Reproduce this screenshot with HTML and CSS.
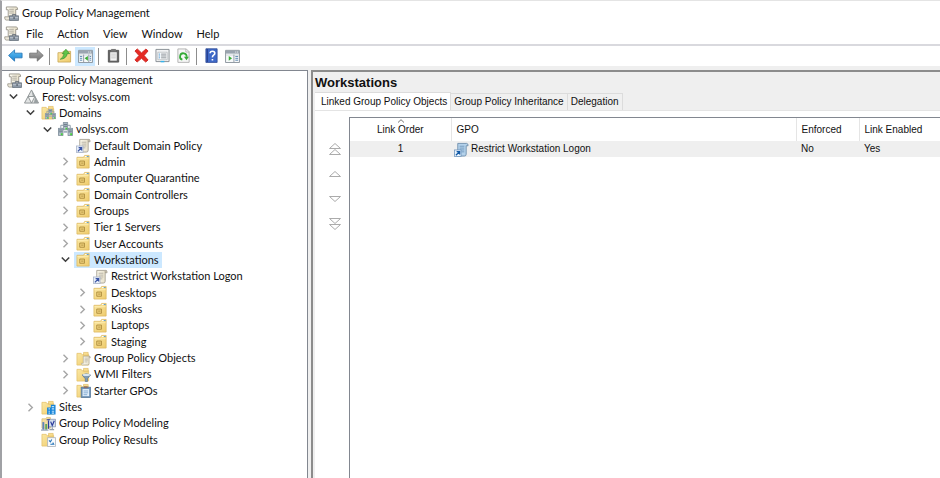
FILE: index.html
```html
<!DOCTYPE html>
<html lang="en">
<head>
<meta charset="utf-8">
<title>Group Policy Management</title>
<link rel="stylesheet" href="styles.css">
</head>
<body>
<svg class="sprite" aria-hidden="true">
  <defs>
    <linearGradient id="gold" x1="0" y1="0" x2="1" y2="1"><stop offset="0" stop-color="#fbe8a4"/><stop offset="1" stop-color="#eecb6c"/></linearGradient>
    <linearGradient id="blue" x1="0" y1="0" x2="0" y2="1"><stop offset="0" stop-color="#63c3f5"/><stop offset="1" stop-color="#1b83d2"/></linearGradient>
    <linearGradient id="grey" x1="0" y1="0" x2="0" y2="1"><stop offset="0" stop-color="#b0b0b0"/><stop offset="1" stop-color="#6f6f6f"/></linearGradient>
    <linearGradient id="paper" x1="0" y1="0" x2="1" y2="0"><stop offset="0" stop-color="#fffef5"/><stop offset="1" stop-color="#e4dcc4"/></linearGradient>
  </defs>
  <symbol id="folder" viewBox="0 0 16 16">
    <path d="M1 2.500h4.500l1 1.500h7v11H1z" fill="url(#gold)" stroke="#e3c06c" stroke-width=".8"/>
    <path d="M8 1.500h5v3H8z" fill="#f8dd8e" stroke="#dcb45a" stroke-width=".6"/>
  </symbol>
  <symbol id="scroll" viewBox="0 0 16 16">
    <path d="M4 1.500h9.500q1.800.2 1.500 2.500h-2v9q0 2-2 2H2.500q-1.500-.3-1.500-2.500h3z" fill="url(#paper)" stroke="#a39d8f" stroke-width=".9"/>
    <path d="M13 4V2.600q.5-1.100 1.400-.8" fill="none" stroke="#8c8677" stroke-width=".8"/>
    <path d="M6 4.500h5M6 6.500h5M6 8.500h5M6 10.500h4" stroke="#aaa69b" stroke-width=".8"/>
  </symbol>
  <symbol id="i-console" viewBox="0 0 16 16">
    <path d="M2.500 1h10.500q1.700.2 1.500 2.700h-2V11h-8V4h-2z" fill="url(#paper)" stroke="#918d82" stroke-width=".9"/>
    <path d="M5.500 3.500h5M5.500 5.500h5M5.500 7.500h5" stroke="#a5a196" stroke-width=".9"/>
    <path d="M.8 11.500h7V15H2.300Q.8 14.700.8 13z" fill="#ece8da" stroke="#918d82" stroke-width=".8"/>
    <path d="M9 10.500V9h3.500v1.500" fill="none" stroke="#66707c"/>
    <rect x="6" y="10.500" width="9.500" height="5" fill="#8c98a6" stroke="#66707c" stroke-width=".8"/>
    <path d="M6.400 12.500h8.700" stroke="#cfd7de" stroke-width=".8"/><path d="M10 12h1.500v1.700H10z" fill="#48525d"/>
  </symbol>
  <symbol id="i-forest" viewBox="0 0 16 16">
    <path d="M8 1L15.500 15H.5z" fill="#e1e3e3" stroke="#84898b" stroke-width=".9"/>
    <path d="M4.400 8h7.200L8 15z" fill="#fafafa" stroke="#84898b" stroke-width=".9"/>
    <path d="M8 1l1.500 7h2.300zM12 8.500L10.500 15h5z" fill="#9aa0a2"/>
  </symbol>
  <symbol id="tower" viewBox="0 0 6 9">
    <path d="M.5 .5h5v8h-5z" fill="#b4c1cc" stroke="#71818f" stroke-width=".8"/>
    <path d="M1.200 2.500h3.600M1.200 4.500h3.600" stroke="#546675" stroke-width=".9"/><path d="M3 6h2v2H3z" fill="#45d13c"/>
  </symbol>
  <symbol id="i-domain" viewBox="0 0 16 16">
    <path d="M3 7V3.500h10V7" fill="none" stroke="#8496a5"/>
    <use href="#tower" x="5" y="0" width="6" height="9"/><use href="#tower" x="0" y="6" width="6" height="9"/><use href="#tower" x="10" y="6" width="6" height="9"/>
    <path d="M6 9.500h4v2H6z" fill="#a3b1bd"/>
  </symbol>
  <symbol id="i-domains" viewBox="0 0 16 16">
    <use href="#folder" width="16" height="16"/>
    <use href="#i-domain" x="4" y="4" width="12" height="12"/>
  </symbol>
  <symbol id="i-link" viewBox="0 0 16 16">
    <use href="#scroll" width="16" height="16"/>
    <rect x=".5" y="8.500" width="7" height="7" fill="#e8effa" stroke="#a5b1c6" stroke-width=".8"/>
    <path d="M2 14.200l3.500-3.500M2.800 10.200h3.200v3.200" fill="none" stroke="#3a55a5" stroke-width="1.300"/>
  </symbol>
  <symbol id="i-gpo" viewBox="0 0 16 16">
    <path d="M4 1.500h9.500q1.800.2 1.500 2.500h-2v9q0 2-2 2H2.500q-1.500-.3-1.500-2.500h3z" fill="#b4d2eb" stroke="#6889a9" stroke-width=".9"/>
    <path d="M6 4.500h5M6 6.500h5M6 8.500h5M8 10.500h3" stroke="#6f96ba" stroke-width=".9"/>
    <rect x=".5" y="8.500" width="7" height="7" fill="#e9f3fc" stroke="#6b92bb" stroke-width=".8"/>
    <path d="M2 14.200l3.500-3.500M2.800 10.200h3.200v3.200" fill="none" stroke="#145ba6" stroke-width="1.400"/>
  </symbol>
  <symbol id="i-ou" viewBox="0 0 16 16">
    <path d="M1 3.500h7l1.200-2H14V15H1z" fill="url(#gold)" stroke="#dcb75e" stroke-width=".8"/>
    <path d="M9.500 2.700h2" stroke="#fff"/><path d="M11.500 2.700h2" stroke="#4c9bdc"/>
    <path d="M1.500 5h12" stroke="#fff0b9" stroke-width=".8"/>
    <path d="M4 7.500h5v4.500H4zM5.500 9.700h2.500" fill="#f0d27c" stroke="#a98739" stroke-width=".9"/>
  </symbol>
  <symbol id="i-objects" viewBox="0 0 16 16">
    <use href="#folder" width="16" height="16"/><use href="#scroll" x="5" y="4" width="11" height="12"/>
  </symbol>
  <symbol id="i-filter" viewBox="0 0 16 16">
    <use href="#folder" width="16" height="16"/>
    <path d="M6.500 8.500q4.500-2.500 9 0l-3.300 4v3h-2.300v-3z" fill="#809bb3" stroke="#5e788f" stroke-width=".8"/><ellipse cx="11" cy="8.500" rx="4" ry="1.200" fill="#d7e4ee"/>
  </symbol>
  <symbol id="i-starter" viewBox="0 0 16 16">
    <use href="#folder" width="16" height="16"/>
    <rect x="5.500" y="4.500" width="10" height="11" fill="#6f93b8" stroke="#56789b" stroke-width=".8"/><path d="M7 6.500h7v7.500H7z" fill="#e6f2fc"/><path d="M8.500 3.500h4v2h-4z" fill="#8f6e62"/><path d="M8 8.500h5M8 10.500h5M8 12.500h4" stroke="#6394c4" stroke-width=".8"/>
  </symbol>
  <symbol id="i-sites" viewBox="0 0 16 16">
    <use href="#folder" width="16" height="16"/>
    <path d="M6.500 8h4V5h5v10.500h-9z" fill="#1684d8"/><path d="M8 9.500h1.500M11.500 7h2.500M8 12h1.500M11.500 9.500h2.500M11.500 12h2.500M8 14h1.500M11.500 14h2.500" stroke="#bfe2fb" stroke-width="1.200"/>
  </symbol>
  <symbol id="i-model" viewBox="0 0 16 16">
    <path d="M1 3h4l1-1.500h4V13H1z" fill="#f4dda0" stroke="#d8b970" stroke-width=".8"/>
    <path d="M8 3.500h7.500v8H8z" fill="#d3deec" stroke="#8292aa" stroke-width=".8"/><path d="M9 14.500h5M12 12v2.500" stroke="#929da8" stroke-width="1.200"/>
    <path d="M1.500 6.500h2v8h-2z" fill="#5b83bd"/><path d="M4.500 8.500h2v6h-2z" fill="#5fa661"/><path d="M8 5v8.500M6 4h3.500M10.300 6l1.700 4 2.200-5" fill="none" stroke="#2b3c9c" stroke-width="1.300"/>
    <path d="M0 15h8" stroke="#71839b"/>
  </symbol>
  <symbol id="i-results" viewBox="0 0 16 16">
    <use href="#folder" width="16" height="16"/>
    <path d="M7 6h8.500v9.500H7z" fill="#f9fbfd" stroke="#a6aeb8" stroke-width=".8"/><path d="M8.500 9l1.500 1.500 1.500-2.500M10 13h3.500l-1-1.700" fill="none" stroke="#2675b9" stroke-width="1.200"/>
  </symbol>
  <symbol id="i-back" viewBox="0 0 16 16"><path d="M.6 8L7 2v3.500h8v5H7V14z" fill="url(#blue)" stroke="#2475b7" stroke-width=".9" stroke-linejoin="round"/></symbol>
  <symbol id="i-forward" viewBox="0 0 16 16"><path d="M15.200 8L8.800 2v3.500H.7v5h8.100V14z" fill="url(#grey)" stroke="#717171" stroke-width=".9" stroke-linejoin="round"/></symbol>
  <symbol id="i-up" viewBox="0 0 16 16">
    <path d="M1 5h4.500l1.200-1.500H14.500V15H1z" fill="url(#gold)" stroke="#c5a14e" stroke-width=".8"/>
    <path d="M3.500 12q3.500-2 4-6H5.500L9.500 1.300 13.500 6h-2.500q-1 5.500-7.500 6z" fill="#61c548" stroke="#338b2d" stroke-width=".7"/>
  </symbol>
  <symbol id="window" viewBox="0 0 16 16">
    <path d="M.6 2.500h14.800v13H.6z" fill="#f7f9fa" stroke="#8a939c"/><path d="M1 3h14v3H1z" fill="#9aa4af"/><path d="M11 4.300h1M13 4.300h1" stroke="#fff"/>
    <path d="M1 7.500h14" stroke="#cfd5da"/>
  </symbol>
  <symbol id="i-tree" viewBox="0 0 16 16"><use href="#window" width="16" height="16"/><path d="M6 7v8M11.500 7v8" stroke="#919ba5"/><path d="M2 9h2.500M2 11h2.500M2 13h2.500M12.500 9H14M12.500 11H14M12.500 13H14" stroke="#5683ad"/><path d="M10.500 8.500v5L7 11z" fill="#39ac35"/></symbol>
  <symbol id="i-action" viewBox="0 0 16 16"><use href="#window" width="16" height="16"/><path d="M4 8.500v5L7.500 11z" fill="#39ac35"/><path d="M9.500 7v8" stroke="#919ba5"/><path d="M11 9h3M11 11h3M11 13h3" stroke="#5683ad"/></symbol>
  <symbol id="i-clip" viewBox="0 0 16 16"><path d="M2.500 2.500h11v12.500h-11z" fill="#666" stroke="#555"/><path d="M4.500 4.500h7v9h-7z" fill="#f5f5f5"/><path d="M5.500 1h5v3h-5z" fill="#777"/><path d="M5.500 6.500h5M5.500 8.500h5M5.500 10.500h5" stroke="#bbb" stroke-width=".8"/></symbol>
  <symbol id="i-delete" viewBox="0 0 16 16"><path d="M1 3.200L3.500 1 8 5.200 12.800 1 15 3.200 10.800 8l4.200 4.800-2.500 2.200L8 11l-4.700 4L1 12.700 5.300 8z" fill="#e62a24" stroke="#c8241f" stroke-width=".9"/></symbol>
  <symbol id="i-props" viewBox="0 0 16 16"><path d="M1 1.500h14v13H1z" fill="#f2f3f4" stroke="#858c92"/><path d="M3 4.500h10v8H3z" fill="#fff" stroke="#b0b5ba" stroke-width=".8"/><path d="M4 6.500h1.500M4 8.500h1.500M4 10.500h1.500" stroke="#4995d1"/><path d="M6.500 6.500H12M6.500 8.500H12M6.500 10.500H12" stroke="#7f878f"/><path d="M6 14.500h4" stroke="#36b4ed" stroke-width="1.500"/></symbol>
  <symbol id="i-refresh" viewBox="0 0 16 16"><path d="M2 1h9l3 3v11.300H2z" fill="#f7f7f7" stroke="#a9a9a9" stroke-width=".9"/><path d="M10.500 1v3.300H14" fill="none" stroke="#a9a9a9" stroke-width=".8"/><path d="M6.800 12.500A3.500 3.500 0 1 1 11.300 9.500" fill="none" stroke="#35aa38" stroke-width="1.900"/><path d="M8.500 9.200h5.200l-2.500 3.800z" fill="#35aa38"/></symbol>
  <symbol id="i-help" viewBox="0 0 16 16"><path d="M2 .8h12v14.600H2z" fill="#3f69c8" stroke="#2a4592" stroke-width=".8"/><path d="M3.500 1v14" stroke="#243d89" stroke-width="1.200"/><path d="M6.500 5.700q0-2.300 2.500-2.300t2.500 2.200q0 1.200-1.300 2t-1.200 2.400M9 11.700v1.700" fill="none" stroke="#fff" stroke-width="1.700"/></symbol>
  <symbol id="c-closed" viewBox="0 0 9 9"><path d="M2.500 .8L6.300 4.500 2.500 8.200" fill="none" stroke="#a6a6a6" stroke-width="1.400"/></symbol>
  <symbol id="c-open" viewBox="0 0 9 9"><path d="M.8 2.500L4.500 6.200 8.200 2.500" fill="none" stroke="#404040" stroke-width="1.600"/></symbol>
  <symbol id="m-up" viewBox="0 0 14 14"><path d="M1.500 9.500h11L7 4.500z" fill="#fff" stroke="#ababab"/></symbol>
  <symbol id="m-down" viewBox="0 0 14 14"><path d="M1.500 4.500h11L7 9.500z" fill="#fff" stroke="#ababab"/></symbol>
  <symbol id="m-top" viewBox="0 0 14 14"><path d="M1.500 6.500h11L7 1.500zM1.500 12.500h11L7 7.500z" fill="#fff" stroke="#ababab"/></symbol>
  <symbol id="m-bottom" viewBox="0 0 14 14"><path d="M1.500 1.500h11L7 6.500zM1.500 7.500h11L7 12.500z" fill="#fff" stroke="#ababab"/></symbol>
</svg>

<div class="window">
  <header class="titlebar"><svg class="icon"><use href="#i-console"/></svg><h1>Group Policy Management</h1></header>
  <nav class="menubar">
    <svg class="icon"><use href="#i-console"/></svg>
    <button>File</button><button>Action</button><button>View</button><button>Window</button><button>Help</button>
  </nav>
  <div class="toolbar" role="toolbar">
    <button aria-label="Back"><svg class="icon"><use href="#i-back"/></svg></button>
    <button aria-label="Forward"><svg class="icon"><use href="#i-forward"/></svg></button>
    <span class="sep"></span>
    <button aria-label="Up one level"><svg class="icon"><use href="#i-up"/></svg></button>
    <button class="pressed" aria-label="Console tree" aria-pressed="true"><svg class="icon"><use href="#i-tree"/></svg></button>
    <span class="sep"></span>
    <button aria-label="Paste"><svg class="icon"><use href="#i-clip"/></svg></button>
    <span class="sep"></span>
    <button aria-label="Delete"><svg class="icon"><use href="#i-delete"/></svg></button>
    <button aria-label="Properties"><svg class="icon"><use href="#i-props"/></svg></button>
    <button aria-label="Refresh"><svg class="icon"><use href="#i-refresh"/></svg></button>
    <span class="sep"></span>
    <button aria-label="Help"><svg class="icon"><use href="#i-help"/></svg></button>
    <button aria-label="Action pane"><svg class="icon"><use href="#i-action"/></svg></button>
  </div>

  <div class="panes">
    <aside class="tree-pane">
      <ul class="tree" role="tree">
        <li class="root" role="treeitem"><span class="node"><svg class="icon"><use href="#i-console"/></svg>Group Policy Management</span></li>
        <li class="l1" role="treeitem"><button class="toggle" aria-label="Collapse"><svg><use href="#c-open"/></svg></button><span class="node"><svg class="icon"><use href="#i-forest"/></svg>Forest: volsys.com</span></li>
        <li class="l2" role="treeitem"><button class="toggle" aria-label="Collapse"><svg><use href="#c-open"/></svg></button><span class="node"><svg class="icon"><use href="#i-domains"/></svg>Domains</span></li>
        <li class="l3" role="treeitem"><button class="toggle" aria-label="Collapse"><svg><use href="#c-open"/></svg></button><span class="node"><svg class="icon"><use href="#i-domain"/></svg>volsys.com</span></li>
        <li class="l4" role="treeitem"><span class="toggle"></span><span class="node"><svg class="icon"><use href="#i-link"/></svg>Default Domain Policy</span></li>
        <li class="l4" role="treeitem"><button class="toggle" aria-label="Expand"><svg><use href="#c-closed"/></svg></button><span class="node"><svg class="icon"><use href="#i-ou"/></svg>Admin</span></li>
        <li class="l4" role="treeitem"><button class="toggle" aria-label="Expand"><svg><use href="#c-closed"/></svg></button><span class="node"><svg class="icon"><use href="#i-ou"/></svg>Computer Quarantine</span></li>
        <li class="l4" role="treeitem"><button class="toggle" aria-label="Expand"><svg><use href="#c-closed"/></svg></button><span class="node"><svg class="icon"><use href="#i-ou"/></svg>Domain Controllers</span></li>
        <li class="l4" role="treeitem"><button class="toggle" aria-label="Expand"><svg><use href="#c-closed"/></svg></button><span class="node"><svg class="icon"><use href="#i-ou"/></svg>Groups</span></li>
        <li class="l4" role="treeitem"><button class="toggle" aria-label="Expand"><svg><use href="#c-closed"/></svg></button><span class="node"><svg class="icon"><use href="#i-ou"/></svg>Tier 1 Servers</span></li>
        <li class="l4" role="treeitem"><button class="toggle" aria-label="Expand"><svg><use href="#c-closed"/></svg></button><span class="node"><svg class="icon"><use href="#i-ou"/></svg>User Accounts</span></li>
        <li class="l4" role="treeitem" aria-selected="true"><button class="toggle" aria-label="Collapse"><svg><use href="#c-open"/></svg></button><span class="node selected"><svg class="icon"><use href="#i-ou"/></svg>Workstations</span></li>
        <li class="l5" role="treeitem"><span class="toggle"></span><span class="node"><svg class="icon"><use href="#i-link"/></svg>Restrict Workstation Logon</span></li>
        <li class="l5" role="treeitem"><button class="toggle" aria-label="Expand"><svg><use href="#c-closed"/></svg></button><span class="node"><svg class="icon"><use href="#i-ou"/></svg>Desktops</span></li>
        <li class="l5" role="treeitem"><button class="toggle" aria-label="Expand"><svg><use href="#c-closed"/></svg></button><span class="node"><svg class="icon"><use href="#i-ou"/></svg>Kiosks</span></li>
        <li class="l5" role="treeitem"><button class="toggle" aria-label="Expand"><svg><use href="#c-closed"/></svg></button><span class="node"><svg class="icon"><use href="#i-ou"/></svg>Laptops</span></li>
        <li class="l5" role="treeitem"><button class="toggle" aria-label="Expand"><svg><use href="#c-closed"/></svg></button><span class="node"><svg class="icon"><use href="#i-ou"/></svg>Staging</span></li>
        <li class="l4" role="treeitem"><button class="toggle" aria-label="Expand"><svg><use href="#c-closed"/></svg></button><span class="node"><svg class="icon"><use href="#i-objects"/></svg>Group Policy Objects</span></li>
        <li class="l4" role="treeitem"><button class="toggle" aria-label="Expand"><svg><use href="#c-closed"/></svg></button><span class="node"><svg class="icon"><use href="#i-filter"/></svg>WMI Filters</span></li>
        <li class="l4" role="treeitem"><button class="toggle" aria-label="Expand"><svg><use href="#c-closed"/></svg></button><span class="node"><svg class="icon"><use href="#i-starter"/></svg>Starter GPOs</span></li>
        <li class="l2" role="treeitem"><button class="toggle" aria-label="Expand"><svg><use href="#c-closed"/></svg></button><span class="node"><svg class="icon"><use href="#i-sites"/></svg>Sites</span></li>
        <li class="l2" role="treeitem"><span class="toggle"></span><span class="node"><svg class="icon"><use href="#i-model"/></svg>Group Policy Modeling</span></li>
        <li class="l2" role="treeitem"><span class="toggle"></span><span class="node"><svg class="icon"><use href="#i-results"/></svg>Group Policy Results</span></li>
      </ul>
    </aside>

    <main class="detail">
      <h2>Workstations</h2>
      <div class="tabs" role="tablist">
        <button class="tab active" role="tab" aria-selected="true">Linked Group Policy Objects</button>
        <button class="tab" role="tab">Group Policy Inheritance</button>
        <button class="tab" role="tab">Delegation</button>
      </div>
      <section class="page">
        <div class="order">
          <button aria-label="Move to top"><svg><use href="#m-top"/></svg></button>
          <button aria-label="Move up"><svg><use href="#m-up"/></svg></button>
          <button aria-label="Move down"><svg><use href="#m-down"/></svg></button>
          <button aria-label="Move to bottom"><svg><use href="#m-bottom"/></svg></button>
        </div>
        <div class="list">
          <table>
            <thead><tr>
              <th class="c-order" scope="col">Link Order<svg class="sort" viewBox="0 0 8 4"><path d="M1 3.500L4 .7 7 3.500" fill="none" stroke="#777"/></svg></th>
              <th scope="col">GPO</th>
              <th class="c-enforced" scope="col">Enforced</th>
              <th class="c-enabled" scope="col">Link Enabled</th>
            </tr></thead>
            <tbody><tr>
              <td class="c-order">1</td>
              <td class="c-gpo"><span class="gpo"><svg class="icon"><use href="#i-gpo"/></svg>Restrict Workstation Logon</span></td>
              <td>No</td>
              <td>Yes</td>
            </tr></tbody>
          </table>
        </div>
      </section>
    </main>
  </div>
</div>
</body>
</html>
```
FILE: styles.css
```css
* { box-sizing: border-box; }

body {
  margin: 0;
  background: #fff;
  color: #111;
  font: 11px/16px Lato, "Noto Sans", sans-serif;
}

button {
  border: 0;
  padding: 0;
  background: none;
  color: inherit;
  font: inherit;
}

svg { display: block; flex: none; }
.sprite { position: absolute; width: 0; height: 0; }
.icon { width: 15px; height: 15px; }

.window {
  display: flex;
  flex-direction: column;
  min-height: 100vh;
  border-left: 2px solid #a0a1a5;
  border-top: 1px solid #e4e4e4;
  background: #efefef;
}

.titlebar, .menubar, .toolbar {
  display: flex;
  align-items: center;
  background: #fff;
}

.titlebar { height: 24px; padding-left: 2px; gap: 3px; }
.titlebar h1 { margin: 0; font-size: 11px; font-weight: 400; }

.menubar {
  height: 21px;
  padding-left: 2px;
  padding-bottom: 2px;
  gap: 14px;
  border-bottom: 2px solid #d9d9de;
}
.menubar .icon { margin-right: -7px; }

.toolbar { height: 20px; padding-left: 3px; gap: 1px; }
.toolbar button {
  display: grid;
  place-items: center;
  width: 20px;
  height: 19px;
  padding-bottom: 1px;
}
.toolbar .pressed { background: #cce8ff; }
.sep { width: 1px; height: 17px; margin: 0 3px 0 2px; background: #8d8d8d; }

.panes {
  display: flex;
  flex: 1;
  gap: 3px;
  padding-top: 4px;
}

.tree-pane {
  flex: 0 0 306px;
  border: 1px solid #828790;
  border-width: 1px 1px 0 0;
  background: #fff;
}

.tree {
  display: grid;
  grid-auto-rows: 1fr;
  min-height: 377px;
  margin: 0;
  padding: 1px 0 0;
  list-style: none;
}
.tree li { display: flex; align-items: center; }
.root { padding-left: 3px; }
.l1 { padding-left: 5px; }
.l2 { padding-left: 22px; }
.l3 { padding-left: 39px; }
.l4 { padding-left: 57px; }
.l5 { padding-left: 74px; }

.toggle {
  display: grid;
  place-items: center;
  width: 12px;
  height: 16px;
  margin-right: 3px;
}
.toggle svg { width: 9px; height: 9px; }

.node {
  display: flex;
  align-items: center;
  gap: 3px;
  padding: 0 3px 0 2px;
}
.selected { background: #cce8ff; }

.detail {
  display: flex;
  flex: 1;
  flex-direction: column;
  min-width: 0;
  border: 2px solid #8c8c8c;
  border-width: 2px 0 0 2px;
  font: 10px/14px "Liberation Sans", sans-serif;
}
.detail h2 {
  margin: 0;
  padding: 2px 0 0 2px;
  font-size: 13px;
  font-weight: 700;
  line-height: 18px;
}

.tabs { display: flex; align-items: flex-end; padding-left: 2px; }
.tab {
  height: 17px;
  padding: 0 3px;
  border: 1px solid #dcdcdc;
  border-width: 1px 1px 0 0;
  background: #f0f0f0;
}
.tab.active {
  height: 19px;
  margin-bottom: -1px;
  padding: 0 3px 0 6px;
  background: #fff;
}

.page {
  display: flex;
  flex: 1;
  gap: 7px;
  margin-left: 2px;
  padding-top: 6px;
  border-top: 1px solid #e4e4e4;
  background: #fff;
}

.order {
  display: flex;
  flex-direction: column;
  gap: 11px;
  padding: 25px 0 0 13px;
}
.order svg { width: 14px; height: 14px; }

.list {
  flex: 1;
  min-width: 0;
  border: 1px solid #828790;
  border-width: 1px 0 0 1px;
}

table { width: 100%; border-collapse: collapse; table-layout: fixed; }
th, td { padding: 0 5px; text-align: left; font-weight: 400; }
th { position: relative; height: 23px; border-right: 1px solid #e5e5e5; }
th:last-child { border-right: 0; }
td { height: 16px; background: #efefef; }
.c-order { width: 101px; text-align: center; }
.c-gpo { padding-left: 3px; }
.c-enforced { width: 63px; }
.c-enabled { width: 81px; }
.sort { position: absolute; top: 1px; left: 47px; width: 8px; height: 4px; }
.gpo { display: flex; align-items: center; gap: 2px; }
```
